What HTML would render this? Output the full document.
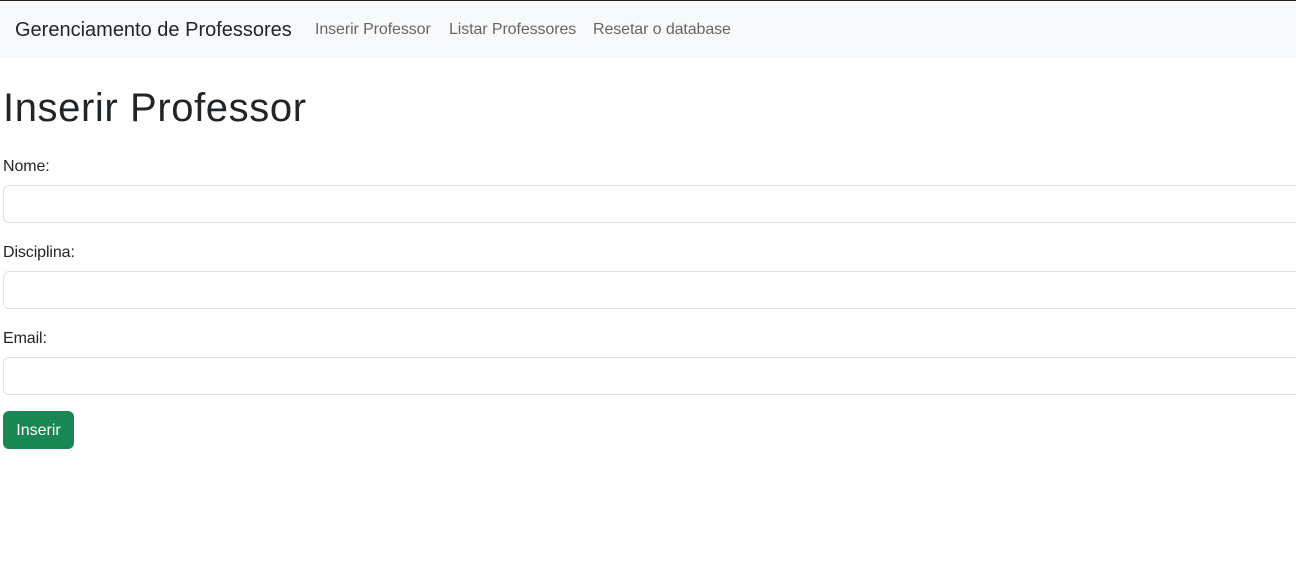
<!DOCTYPE html>
<html><head><meta charset="utf-8"><style>
*{box-sizing:border-box}
body{margin:0;font-family:"Liberation Sans",sans-serif;color:#212529;background:#fff;width:1296px;height:562px;overflow:hidden;font-size:16px}
.nav{border-top:1px solid #222;background:#f8f9fa;height:57px;position:relative}
.nav span{position:absolute;top:20px;white-space:nowrap}
.brand{left:15px;font-size:20px;top:18px!important;color:#212529;letter-spacing:0}
.lk{color:rgba(0,0,0,.6);font-size:16px;letter-spacing:-0.1px}
h1{position:absolute;left:3px;top:86px;margin:0;font-size:40px;font-weight:400;letter-spacing:0.6px;line-height:44px}
.l{position:absolute;left:3px;font-size:16px;letter-spacing:-0.1px}
.in{position:absolute;left:3px;width:1310px;height:38px;border:1px solid #dee2e6;border-radius:6px;background:#fff}
.btn{position:absolute;left:3px;top:411px;width:71px;height:38px;background:#198754;border-radius:6px;color:#fff;text-align:center;line-height:40px;font-size:16px}
</style></head><body>
<div class="nav">
<span class="brand">Gerenciamento de Professores</span>
<span class="lk" style="left:315px">Inserir Professor</span>
<span class="lk" style="left:449px">Listar Professores</span>
<span class="lk" style="left:593px">Resetar o database</span>
</div>
<h1>Inserir Professor</h1>
<div class="l" style="top:158px">Nome:</div>
<div class="in" style="top:185px"></div>
<div class="l" style="top:244px">Disciplina:</div>
<div class="in" style="top:271px"></div>
<div class="l" style="top:330px">Email:</div>
<div class="in" style="top:357px"></div>
<div class="btn">Inserir</div>
</body></html>
